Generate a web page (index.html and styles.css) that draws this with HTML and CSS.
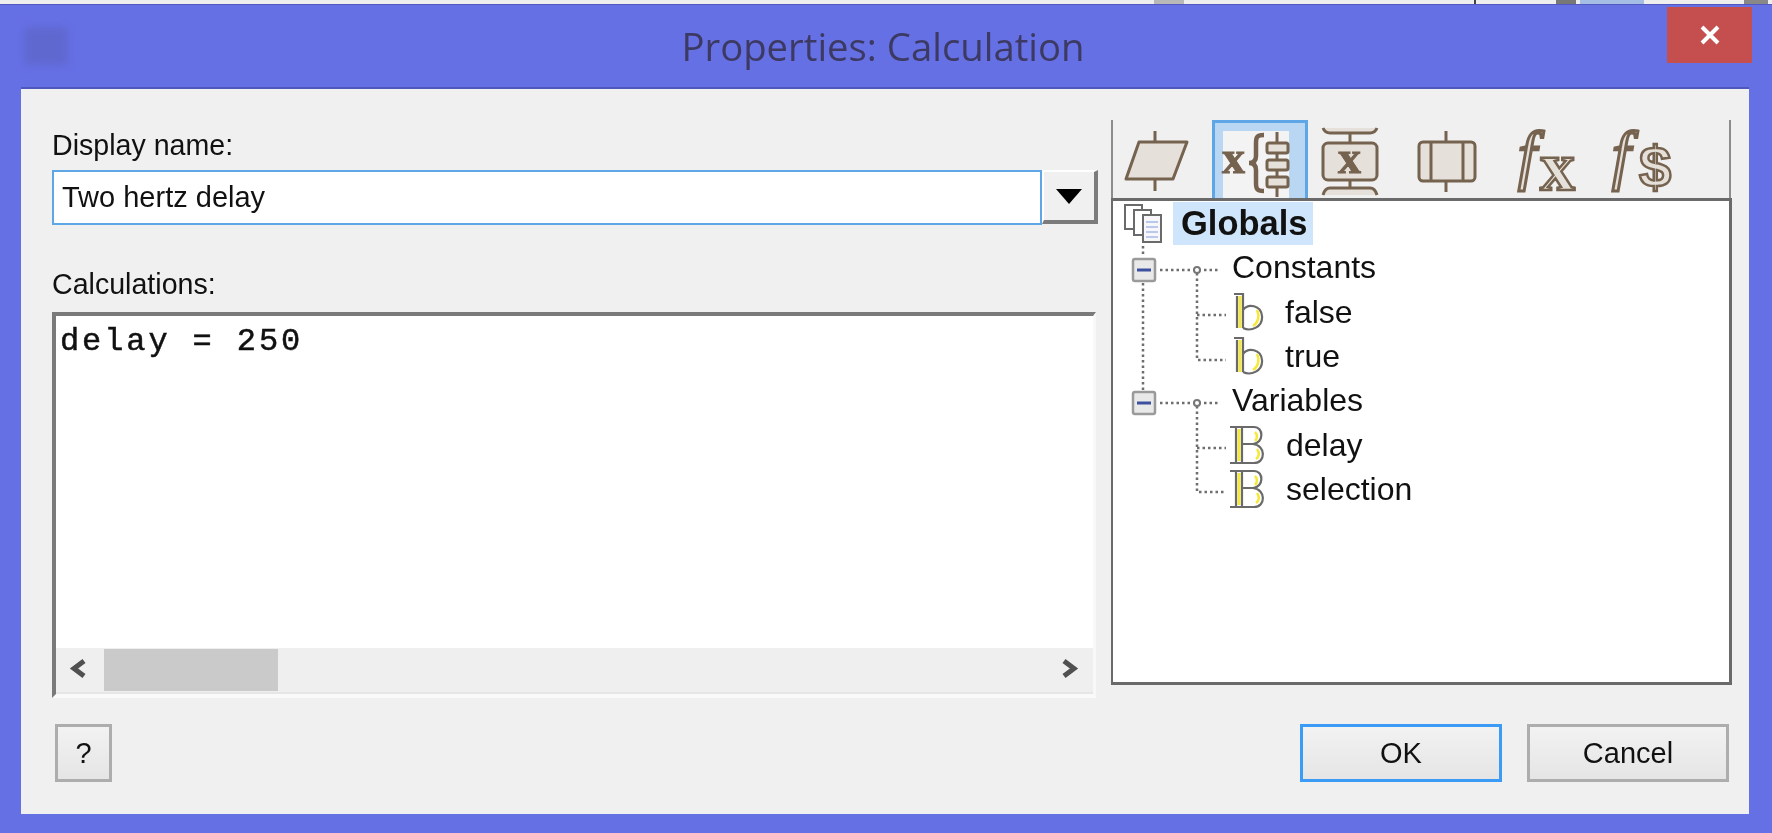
FILE: index.html
```html
<!DOCTYPE html>
<html lang="en">
<head>
<meta charset="utf-8">
<title>Properties: Calculation</title>
<link rel="stylesheet" href="styles.css">
</head>
<body>
<div class="strip"><span class="bit b1"></span><span class="bit b2"></span><span class="bit b3"></span><span class="bit b4"></span><span class="bit b5"></span></div>
<div class="window">
  <header class="titlebar">
    <span class="appicon"></span>
    <h1 class="title">Properties: Calculation</h1>
    <button class="close"><svg width="20" height="20" viewBox="0 0 20 20"><path d="M2 2 18 18M18 2 2 18" stroke="#fff" stroke-width="4"/></svg></button>
  </header>
  <main class="client">
    <div class="panes">
      <section class="left">
        <div class="label">Display name:</div>
        <div class="combo">
          <div class="field">Two hertz delay</div>
          <div class="dropbtn"><svg width="26" height="15" viewBox="0 0 26 15"><path d="M0 0H26L13 15Z" fill="#000"/></svg></div>
        </div>
        <div class="label second">Calculations:</div>
        <div class="editor">
          <div class="code">delay = 250</div>
          <div class="hscroll">
            <svg class="arrow" width="18" height="21" viewBox="0 0 18 21"><path d="M15 3 5 10.500 15 18" fill="none" stroke="#505050" stroke-width="5"/></svg>
            <span class="thumb"></span>
            <svg class="arrow" width="18" height="21" viewBox="0 0 18 21"><path d="M3 3 13 10.500 3 18" fill="none" stroke="#505050" stroke-width="5"/></svg>
          </div>
        </div>
      </section>
      <section class="right">
        <div class="tabs">
          <div class="tab"><svg width="96" height="78" viewBox="0 0 96 78"><path class="st" d="M39 11V22M39 59V71"/><path class="ic" d="M10 59 23 22H71L57 59Z"/></svg></div>
          <div class="tab active"><span class="tabinner"></span><svg width="96" height="78" viewBox="0 0 96 78"><text class="tx" x="10" y="53">x</text><path class="st thick" d="M52 15C44 15 44 18 44 24V36C44 41 41 43 37 43 41 43 44 45 44 50V62C44 68 44 71 52 71"/><path class="st" d="M65 12V77"/><rect class="ic" x="55" y="23" width="21" height="10" rx="2"/><rect class="ic" x="55" y="40" width="21" height="10" rx="2"/><rect class="ic" x="55" y="57" width="21" height="10" rx="2"/></svg></div>
          <div class="tab"><svg width="96" height="78" viewBox="0 0 96 78"><path class="ic" d="M15 8Q17 13 22 13H62Q67 13 69 8"/><path class="ic" d="M15 75Q17 68 22 68H62Q67 68 69 75"/><path class="st" d="M42 13V23M42 60V68"/><rect class="ic" x="15" y="23" width="54" height="37" rx="5"/><text class="tx" x="30" y="53">x</text></svg></div>
          <div class="tab"><svg width="96" height="78" viewBox="0 0 96 78"><path class="st" d="M42 11V22M42 61V72"/><rect class="ic" x="15" y="22" width="56" height="39" rx="4"/><path class="st" d="M27 22V61M59 22V61"/></svg></div>
          <div class="tab"><svg width="96" height="78" viewBox="0 0 96 78"><text class="fn" x="18" y="57">f</text><text class="outl" x="40" y="70">x</text></svg></div>
          <div class="tab"><svg width="96" height="78" viewBox="0 0 96 78"><text class="fn" x="16" y="57">f</text><text class="dollar" x="43" y="67">$</text></svg></div>
        </div>
        <div class="tree">
          <svg class="lines" width="260" height="320" viewBox="0 0 260 320">
            <path class="dots" d="M30 45V56M30 82V190M47 69H105M84 72V159H113M84 114H113M47 202H105M84 205V291H113M84 247H113"/>
            <circle class="node" cx="84" cy="69" r="3"/><circle class="node" cx="84" cy="202" r="3"/>
            <rect class="toggle" x="20" y="58" width="22" height="22" rx="2"/><path class="minus" d="M24 69H38"/>
            <rect class="toggle" x="20" y="191" width="22" height="22" rx="2"/><path class="minus" d="M24 202H38"/>
          </svg>
          <div class="row root">
            <svg class="copy" width="40" height="40" viewBox="0 0 40 40"><rect class="doc" x="1" y="2" width="17" height="24"/><rect class="doc" x="10" y="7" width="17" height="25"/><rect class="doc front" x="19" y="12" width="18" height="27"/><path class="rule" d="M22 19H34M22 24H34M22 29H34M22 34H34"/></svg>
            <span class="sel">Globals</span>
          </div>
          <div class="row group">Constants</div>
          <div class="row item"><svg class="ty" width="36" height="40" viewBox="0 0 36 40"><path class="yel" d="M7 4V36"/><path class="gr" d="M1 2H10V36M4 4V36M10 18C15 11 28 13 29 24 30 35 18 40 10 36"/><path class="yel2" d="M24 18C27 24 25 31 20 34"/></svg><span class="name">false</span></div>
          <div class="row item"><svg class="ty" width="36" height="40" viewBox="0 0 36 40"><path class="yel" d="M7 4V36"/><path class="gr" d="M1 2H10V36M4 4V36M10 18C15 11 28 13 29 24 30 35 18 40 10 36"/><path class="yel2" d="M24 18C27 24 25 31 20 34"/></svg><span class="name">true</span></div>
          <div class="row group">Variables</div>
          <div class="row item big"><svg class="ty" width="38" height="40" viewBox="0 0 38 40"><path class="yel" d="M9 4V36"/><path class="gr" d="M0 2H24C34 2 34 18 23 19 36 20 36 38 24 38H0M6 3V37M12 3V37M12 19H23"/><path class="yel2" d="M25 7C28 10 27 14 25 16M27 24C30 28 29 32 26 34"/></svg><span class="name">delay</span></div>
          <div class="row item big"><svg class="ty" width="38" height="40" viewBox="0 0 38 40"><path class="yel" d="M9 4V36"/><path class="gr" d="M0 2H24C34 2 34 18 23 19 36 20 36 38 24 38H0M6 3V37M12 3V37M12 19H23"/><path class="yel2" d="M25 7C28 10 27 14 25 16M27 24C30 28 29 32 26 34"/></svg><span class="name">selection</span></div>
        </div>
      </section>
    </div>
    <footer class="footer">
      <button class="btn help">?</button>
      <div class="actions">
        <button class="btn primary">OK</button>
        <button class="btn">Cancel</button>
      </div>
    </footer>
  </main>
</div>
</body>
</html>
```
FILE: styles.css
```css
* { box-sizing: border-box; }
html, body { margin: 0; padding: 0; height: 833px; overflow: hidden; background: #f0f0f0; }
body { font-family: "Liberation Sans", Arial, sans-serif; color: #111; }

.strip { height: 4px; background: #eeeeee; display: flex; justify-content: flex-end; }
.bit { display: block; height: 4px; }
.b1 { width: 30px; margin-right: 290px; background: #b8b8b8; }
.b2 { width: 2px; margin-right: 80px; background: #444; }
.b3 { width: 20px; margin-right: 4px; background: #777; }
.b4 { width: 64px; margin-right: 100px; background: #a4bde4; }
.b5 { width: 24px; margin-right: 4px; background: #888; }

.window { height: 829px; background: #6670e5; border-top: 1px solid #5159c0; display: flex; flex-direction: column; filter: blur(0.45px); }
.titlebar { height: 84px; flex: none; display: flex; justify-content: center; position: relative; }
.appicon { position: absolute; left: 24px; top: 22px; width: 44px; height: 38px; background: #5f68cf; filter: blur(4px); }
.title { margin: 16px 6px 0 0; font-family: "Open Sans", "Noto Sans", sans-serif; font-size: 38.300px; line-height: 50px; font-weight: 400; color: #3c3a63; }
.close { position: absolute; right: 20px; top: 2px; width: 85px; height: 56px; background: #c54f4f; border: 0; padding: 0; display: flex; align-items: center; justify-content: center; }

.client { flex: none; height: 725px; margin: 0 23px 0 21px; background: #f0f0f0; box-shadow: 0 -2px 0 #4e57bd; padding: 31px 17px 32px 31px; display: flex; flex-direction: column; justify-content: space-between; }
.panes { display: flex; gap: 13px; height: 577px; }

.left { width: 1046px; flex: none; }
.label { font-size: 28.600px; line-height: 38px; height: 36px; margin-top: 6px; }
.label.second { margin-top: 40px; }
.combo { display: flex; height: 55px; margin-top: 8px; }
.field { width: 990px; height: 55px; background: #fff; border: 2px solid #5fa6e6; padding: 0 8px; font-size: 29px; line-height: 51px; }
.dropbtn { width: 56px; height: 54px; background: #f0f0f0; border-top: 2px solid #fff; border-left: 2px solid #fff; border-right: 4px solid #7b7b7b; border-bottom: 4px solid #7b7b7b; display: flex; align-items: center; justify-content: center; }

.editor { height: 386px; margin: 11px 2px 0 0; background: #fff; border-top: 4px solid #7a7a7a; border-left: 4px solid #7a7a7a; border-right: 3px solid #f8f8f8; border-bottom: 4px solid #fafafa; display: flex; flex-direction: column; justify-content: space-between; }
.code { font-family: "Liberation Mono", monospace; font-size: 32px; line-height: 40px; letter-spacing: 2.900px; padding: 6px 0 0 4px; color: #111; -webkit-text-stroke: 0.5px #111; }
.hscroll { height: 46px; background: #efefef; border-bottom: 2px solid #e6e6e6; display: flex; align-items: center; padding: 0 14px 4px 13px; }
.arrow { flex: none; }
.thumb { width: 174px; height: 42px; margin: 4px auto 0 17px; background: #cacaca; }

.right { width: 621px; flex: none; display: flex; flex-direction: column; height: 565px; }
.tabs { height: 78px; flex: none; display: flex; padding-left: 3px; border-left: 2px solid #8c8c8c; border-right: 2px solid #8c8c8c; margin-right: 1px; }
.tab { width: 96px; height: 78px; position: relative; }
.tab svg { position: relative; display: block; overflow: visible; }
.tab.active { background: #b9d6f2; border: 3px solid #5fa6e6; border-bottom: 0; }
.tab.active svg { left: -3px; top: -3px; }
.tabinner { position: absolute; left: 8px; top: 8px; width: 66px; height: 67px; background: #f3f3f3; }
.st { fill: none; stroke: #75624f; stroke-width: 3; }
.st.thick { stroke-width: 4.500; }
.ic { fill: #e6e0da; stroke: #75624f; stroke-width: 3; stroke-linejoin: round; }
.tx { font-family: "Liberation Serif", serif; font-weight: 700; font-size: 46px; fill: #75624f; stroke: #75624f; stroke-width: 1; }
.fn { font-family: "Liberation Serif", serif; font-style: italic; font-size: 66px; fill: #e6e0da; stroke: #75624f; stroke-width: 3; }
.outl { font-family: "Liberation Serif", serif; font-weight: 700; font-size: 70px; fill: #e6e0da; stroke: #75624f; stroke-width: 2.500; }
.dollar { font-family: "Liberation Sans", sans-serif; font-weight: 700; font-size: 58px; fill: #e6e0da; stroke: #75624f; stroke-width: 2.500; }

.tree { height: 487px; flex: none; position: relative; background: #fff; border-top: 3px solid #6a6a6a; border-left: 2px solid #6a6a6a; border-right: 3px solid #6a6a6a; border-bottom: 3px solid #6a6a6a; font-size: 32px; }
.lines { position: absolute; left: 0; top: 0; }
.dots { fill: none; stroke: #6e6e6e; stroke-width: 2.500; stroke-dasharray: 2.500 3; }
.node { fill: #fff; stroke: #777; stroke-width: 2; }
.toggle { fill: #e9e9e9; stroke: #9a9a9a; stroke-width: 2.500; }
.minus { stroke: #3d4f9f; stroke-width: 3; fill: none; }
.row { height: 44.300px; line-height: 46px; display: flex; align-items: center; position: relative; white-space: nowrap; }
.row.root { padding-left: 11px; }
.copy { flex: none; }
.doc { fill: #fff; stroke: #6a6a6a; stroke-width: 2; }
.doc.front { fill: #f6f6fb; }
.rule { stroke: #b8c9ea; stroke-width: 2; fill: none; }
.sel { margin-left: 9px; height: 43px; line-height: 43px; padding: 0 5px 0 8px; background: #cfe5fb; font-weight: 700; font-size: 34.500px; }
.row.group { padding-left: 119px; }
.row.item { padding-left: 120px; }
.row.item.big { padding-left: 117px; }
.ty { flex: none; margin-right: 16px; }
.row.item.big .ty { margin-right: 18px; }
.yel { stroke: #f5e93a; stroke-width: 3; fill: none; }
.yel2 { stroke: #f5e93a; stroke-width: 2.500; fill: none; }
.gr { stroke: #6a6a6a; stroke-width: 2.200; fill: none; }

.footer { display: flex; justify-content: space-between; height: 58px; flex: none; margin: 0 3px 0 3px; }
.actions { display: flex; gap: 25px; }
.btn { width: 202px; height: 58px; border: 3px solid #adadad; background: linear-gradient(#f2f2f2, #e5e5e5); font: 400 29px "Liberation Sans", Arial, sans-serif; color: #111; padding: 0; }
.btn.primary { border-color: #3c9cf5; }
.btn.help { width: 57px; }
```
